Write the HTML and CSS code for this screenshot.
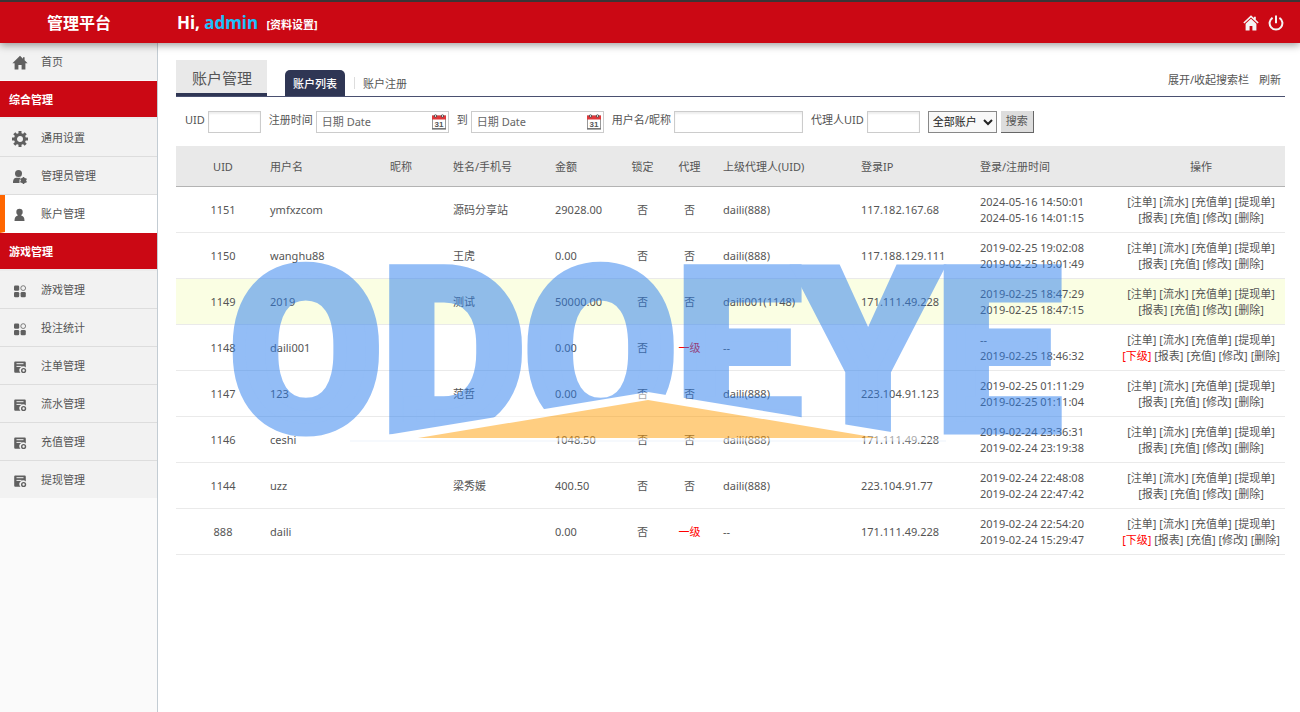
FILE: index.html
```html
<!DOCTYPE html>
<html lang="zh-CN">
<head>
<meta charset="utf-8">
<title>管理平台</title>
<link rel="stylesheet" href="styles.css">
</head>
<body>
<svg class="defs" aria-hidden="true">
  <symbol id="i-home" viewBox="0 0 16 16"><path d="M8 0.8 0.4 8.2h2.2V14.6h3.8V10h3.2v4.6h3.8V8.2h2.2L12.6 5.300V2.200h-1.600v1.500z"/></symbol>
  <symbol id="i-home2" viewBox="0 0 16 16"><path d="M8 0.300 0.300 7.500l1.100 1.100L8 2.500l6.600 6.100 1.100-1.100-2.900-2.700V1.800h-1.900v1.200z"/><path d="M8 3.700 2.600 8.700V15.500h4v-4.500h2.800v4.500h4V8.700z"/></symbol>
  <symbol id="i-power" viewBox="0 0 16 16"><path d="M4.600 2.800A6.400 6.400 0 1 0 11.400 2.800M8 0.500V8.200" fill="none" stroke="currentColor" stroke-width="2"/></symbol>
  <symbol id="i-gear" viewBox="0 0 16 16"><circle cx="8" cy="8" r="4.500" fill="none" stroke="currentColor" stroke-width="3"/><path d="M8 0v3M8 13v3M0 8h3M13 8h3M2.300 2.300l2.200 2.200M11.500 11.500l2.200 2.200M2.300 13.700l2.200-2.200M11.500 4.500l2.200-2.200" stroke="currentColor" stroke-width="3"/></symbol>
  <symbol id="i-admin" viewBox="0 0 16 16"><circle cx="6.500" cy="4.500" r="3.500"/><path d="M1 14c0-4 1.500-5.200 4-5.200h3.500L7.500 11v3z"/><circle cx="11.500" cy="11.500" r="2.700"/><path d="M11.500 8v7M8.500 9.800l6 3.500M8.500 13.300l6-3.500" stroke="currentColor" stroke-width="1.600"/></symbol>
  <symbol id="i-user" viewBox="0 0 16 16"><circle cx="7.500" cy="5" r="3.200"/><path d="M6 7h3l.5 1.800c2 .4 3 2 3 5.200h-10c0-3.200 1-4.800 3-5.200z"/></symbol>
  <symbol id="i-grid" viewBox="0 0 16 16"><rect x="2" y="2.500" width="5.200" height="5.200" rx="1.300"/><rect x="2" y="9" width="5.200" height="5.200" rx="1.300"/><rect x="8.600" y="9" width="5.200" height="5.200" rx="1.300"/><circle cx="11.200" cy="5.100" r="2.400" fill="none" stroke="currentColor" stroke-width="0.800"/></symbol>
  <symbol id="i-list" viewBox="0 0 16 16"><path d="M3.500 2.500h9c.8 0 1.300.5 1.300 1.200V8.600a3.600 3.600 0 0 0-5.300 5.200h-5c-.8 0-1.300-.5-1.300-1.300V3.700c0-.7.5-1.200 1.300-1.200z"/><path d="M4.500 4.700h7M4.500 7.400h5" stroke="#f2f2f2" stroke-width="1"/><circle cx="11.600" cy="11.500" r="1.900" fill="none" stroke="currentColor" stroke-width="1.400"/></symbol>
  <symbol id="i-cal" viewBox="0 0 14 16"><rect x="0.500" y="2" width="13" height="12.500" fill="#fff" stroke="#999"/><path d="M0 1.500h14v4H0z" fill="#e0383b"/><path d="M0 15h14" stroke="#555"/><circle cx="3.500" cy="2" r="1.200" fill="#fff" stroke="#333" stroke-width="0.800"/><circle cx="10.500" cy="2" r="1.200" fill="#fff" stroke="#333" stroke-width="0.800"/><text x="7" y="13" text-anchor="middle" class="cal-num">31</text></symbol>
</svg>

<header class="topbar">
  <h1 class="brand">管理平台</h1>
  <div class="hello">Hi, <span class="hello-name">admin</span> <a class="hello-link" href="#">[资料设置]</a></div>
  <nav class="top-actions">
    <a href="#" aria-label="首页"><svg><use href="#i-home2"/></svg></a>
    <a href="#" aria-label="退出"><svg><use href="#i-power"/></svg></a>
  </nav>
</header>

<div class="layout">
  <nav class="sidebar">
    <a class="item home" href="#"><svg><use href="#i-home"/></svg>首页</a>
    <h2 class="group">综合管理</h2>
    <a class="item" href="#"><svg><use href="#i-gear"/></svg>通用设置</a>
    <a class="item" href="#"><svg><use href="#i-admin"/></svg>管理员管理</a>
    <a class="item active" href="#"><svg><use href="#i-user"/></svg>账户管理</a>
    <h2 class="group">游戏管理</h2>
    <a class="item" href="#"><svg><use href="#i-grid"/></svg>游戏管理</a>
    <a class="item" href="#"><svg><use href="#i-grid"/></svg>投注统计</a>
    <a class="item" href="#"><svg><use href="#i-list"/></svg>注单管理</a>
    <a class="item" href="#"><svg><use href="#i-list"/></svg>流水管理</a>
    <a class="item" href="#"><svg><use href="#i-list"/></svg>充值管理</a>
    <a class="item" href="#"><svg><use href="#i-list"/></svg>提现管理</a>
  </nav>

  <main class="content">
    <div class="tabs">
      <h2 class="title">账户管理</h2>
      <a class="tab current" href="#">账户列表</a>
      <a class="tab" href="#">账户注册</a>
      <div class="tools"><a href="#">展开/收起搜索栏</a><a href="#">刷新</a></div>
    </div>

    <form class="search">
      <label for="uid">UID</label><input id="uid" class="short" type="text">
      <label for="from">注册时间</label><span class="date"><input id="from" type="text" placeholder="日期 Date"><svg><use href="#i-cal"/></svg></span>
      <label for="to">到</label><span class="date"><input id="to" type="text" placeholder="日期 Date"><svg><use href="#i-cal"/></svg></span>
      <label for="name">用户名/昵称</label><input id="name" class="long" type="text">
      <label for="agent">代理人UID</label><input id="agent" class="short" type="text">
      <select aria-label="账户类型"><option>全部账户</option></select>
      <button type="button">搜索</button>
    </form>

    <div class="table-wrap">
    <table>
      <colgroup><col class="c-uid"><col class="c-user"><col class="c-nick"><col class="c-real"><col class="c-money"><col class="c-flag"><col class="c-flag"><col class="c-parent"><col class="c-ip"><col class="c-time"><col class="c-ops"></colgroup>
      <thead>
        <tr><th class="mid">UID</th><th>用户名</th><th>昵称</th><th>姓名/手机号</th><th>金额</th><th class="mid">锁定</th><th class="mid">代理</th><th class="parent">上级代理人(UID)</th><th>登录IP</th><th>登录/注册时间</th><th class="mid">操作</th></tr>
      </thead>
      <tbody>
        <tr><td class="mid">1151</td><td>ymfxzcom</td><td></td><td>源码分享站</td><td>29028.00</td><td class="mid">否</td><td class="mid">否</td><td class="parent">daili(888)</td><td>117.182.167.68</td><td>2024-05-16 14:50:01<br>2024-05-16 14:01:15</td><td class="mid"><a href="#">[注单]</a> <a href="#">[流水]</a> <a href="#">[充值单]</a> <a href="#">[提现单]</a><br><a href="#">[报表]</a> <a href="#">[充值]</a> <a href="#">[修改]</a> <a href="#">[删除]</a></td></tr>
        <tr><td class="mid">1150</td><td>wanghu88</td><td></td><td>王虎</td><td>0.00</td><td class="mid">否</td><td class="mid">否</td><td class="parent">daili(888)</td><td>117.188.129.111</td><td>2019-02-25 19:02:08<br>2019-02-25 19:01:49</td><td class="mid"><a href="#">[注单]</a> <a href="#">[流水]</a> <a href="#">[充值单]</a> <a href="#">[提现单]</a><br><a href="#">[报表]</a> <a href="#">[充值]</a> <a href="#">[修改]</a> <a href="#">[删除]</a></td></tr>
        <tr class="hover"><td class="mid">1149</td><td>2019</td><td></td><td>测试</td><td>50000.00</td><td class="mid">否</td><td class="mid">否</td><td class="parent">daili001(1148)</td><td>171.111.49.228</td><td>2019-02-25 18:47:29<br>2019-02-25 18:47:15</td><td class="mid"><a href="#">[注单]</a> <a href="#">[流水]</a> <a href="#">[充值单]</a> <a href="#">[提现单]</a><br><a href="#">[报表]</a> <a href="#">[充值]</a> <a href="#">[修改]</a> <a href="#">[删除]</a></td></tr>
        <tr><td class="mid">1148</td><td>daili001</td><td></td><td></td><td>0.00</td><td class="mid">否</td><td class="mid red">一级</td><td class="parent">--</td><td></td><td>--<br>2019-02-25 18:46:32</td><td class="mid"><a href="#">[注单]</a> <a href="#">[流水]</a> <a href="#">[充值单]</a> <a href="#">[提现单]</a><br><a class="red" href="#">[下级]</a> <a href="#">[报表]</a> <a href="#">[充值]</a> <a href="#">[修改]</a> <a href="#">[删除]</a></td></tr>
        <tr><td class="mid">1147</td><td>123</td><td></td><td>范哲</td><td>0.00</td><td class="mid">否</td><td class="mid">否</td><td class="parent">daili(888)</td><td>223.104.91.123</td><td>2019-02-25 01:11:29<br>2019-02-25 01:11:04</td><td class="mid"><a href="#">[注单]</a> <a href="#">[流水]</a> <a href="#">[充值单]</a> <a href="#">[提现单]</a><br><a href="#">[报表]</a> <a href="#">[充值]</a> <a href="#">[修改]</a> <a href="#">[删除]</a></td></tr>
        <tr><td class="mid">1146</td><td>ceshi</td><td></td><td></td><td>1048.50</td><td class="mid">否</td><td class="mid">否</td><td class="parent">daili(888)</td><td>171.111.49.228</td><td>2019-02-24 23:36:31<br>2019-02-24 23:19:38</td><td class="mid"><a href="#">[注单]</a> <a href="#">[流水]</a> <a href="#">[充值单]</a> <a href="#">[提现单]</a><br><a href="#">[报表]</a> <a href="#">[充值]</a> <a href="#">[修改]</a> <a href="#">[删除]</a></td></tr>
        <tr><td class="mid">1144</td><td>uzz</td><td></td><td>梁秀媛</td><td>400.50</td><td class="mid">否</td><td class="mid">否</td><td class="parent">daili(888)</td><td>223.104.91.77</td><td>2019-02-24 22:48:08<br>2019-02-24 22:47:42</td><td class="mid"><a href="#">[注单]</a> <a href="#">[流水]</a> <a href="#">[充值单]</a> <a href="#">[提现单]</a><br><a href="#">[报表]</a> <a href="#">[充值]</a> <a href="#">[修改]</a> <a href="#">[删除]</a></td></tr>
        <tr><td class="mid">888</td><td>daili</td><td></td><td></td><td>0.00</td><td class="mid">否</td><td class="mid red">一级</td><td class="parent">--</td><td>171.111.49.228</td><td>2019-02-24 22:54:20<br>2019-02-24 15:29:47</td><td class="mid"><a href="#">[注单]</a> <a href="#">[流水]</a> <a href="#">[充值单]</a> <a href="#">[提现单]</a><br><a class="red" href="#">[下级]</a> <a href="#">[报表]</a> <a href="#">[充值]</a> <a href="#">[修改]</a> <a href="#">[删除]</a></td></tr>
      </tbody>
    </table>
    <svg class="watermark" viewBox="0 0 860 190">
      <text x="-2" y="172" class="wm-text">ODOEYE</text>
      <path d="M118 185 416 136 714 185z" fill="#fff"/>
      <path d="M118 185H714" stroke="#dfeafb"/>
      <path d="M186 182 416 144 646 182z" fill="#ff9e05"/>
    </svg>
    </div>
  </main>
</div>
</body>
</html>
```
FILE: styles.css
```css
* { box-sizing: border-box; }
body {
  margin: 0;
  min-height: 100vh;
  display: flex;
  flex-direction: column;
  font: 11px/16px "Noto Sans", "Noto Sans CJK SC", sans-serif;
  color: #555;
  background: #fff;
}
a { color: inherit; text-decoration: none; }
h1, h2 { margin: 0; font-size: inherit; }
.defs { display: none; }

.topbar {
  position: relative;
  display: flex;
  align-items: center;
  height: 43px;
  padding-right: 16px;
  border-top: 2px solid #3a3536;
  background: #cb0814;
  color: #fff;
  box-shadow: 0 2px 8px rgba(0, 0, 0, 0.4);
}
.brand { width: 158px; text-align: center; font-size: 16px; }
.hello { padding: 2px 0 0 19px; font-size: 17px; font-weight: bold; }
.hello-name { color: #1cc0fa; }
.hello-link { margin-left: 4px; font-size: 11px; }
.top-actions { display: flex; gap: 9px; margin-left: auto; }
.top-actions a { display: flex; }
.top-actions svg { width: 16px; height: 16px; fill: #f4f4f4; color: #f4f4f4; }

.layout { flex: 1; display: flex; }
.sidebar {
  width: 158px;
  flex-shrink: 0;
  border-right: 1px solid #c3ccd3;
  background: #fafafa;
}
.item {
  display: flex;
  align-items: center;
  gap: 13px;
  height: 38px;
  padding-left: 12px;
  border-bottom: 1px solid #ddd;
  background: #f2f2f2;
}
.item:last-child, .item.home { border-bottom-color: transparent; background-clip: padding-box; }
.item svg { width: 16px; height: 16px; margin-top: 3px; fill: #606060; color: #606060; }
.item.active { padding-left: 7px; border-left: 5px solid #f60; border-bottom-color: #fff; background: #fff; }
.group {
  height: 38px;
  padding-left: 9px;
  border-bottom: 2px solid #ececec;
  background: #cb0814;
  color: #fff;
  line-height: 38px;
}

.content { flex: 1; min-width: 0; padding: 17px 15px 20px 18px; }
.tabs { display: flex; align-items: flex-end; height: 37px; border-bottom: 1px solid #4a5070; }
.title {
  height: 36px;
  margin-right: 18px;
  padding: 0 15px 0 16px;
  border-bottom: 3px solid #2f3654;
  background: #e9e9e9;
  font-size: 15px;
  font-weight: normal;
  line-height: 36px;
}
.tab { height: 26px; padding: 0 8px; line-height: 28px; }
.tab.current { margin-right: 9px; border-radius: 5px 5px 0 0; background: #2f3654; color: #fff; font-weight: 500; }
.tab + .tab:not(.current) { height: 12px; margin-bottom: 7px; border-left: 1px solid #ddd; line-height: 14px; }
.tools { display: flex; gap: 10px; margin-left: auto; padding: 0 4px 8px 0; }

.search { display: flex; align-items: center; height: 49px; padding-left: 9px; }
.search label { margin-right: 3px; padding-bottom: 3px; white-space: nowrap; }
.search input, .search select, .search button {
  height: 22px;
  margin: 0;
  padding: 0 5px;
  font: inherit;
  color: #555;
}
.search input { border: 1px solid #ccc; background: #fff; margin-right: 8px; }
.search input.short, .search input.long { box-shadow: inset 0 2px 2px #eee; }
.search .short { width: 53px; }
.search .long { width: 129px; }
.date { position: relative; display: flex; }
.date input { width: 133px; }
.date svg { position: absolute; top: 3px; right: 11px; width: 14px; height: 16px; }
.search input::placeholder { color: #666; opacity: 1; }
.cal-num { font: bold 8px "Liberation Sans", sans-serif; fill: #555; }
.search select {
  width: 69px;
  margin-right: 4px;
  padding: 0;
  border: 1px solid #888;
  border-radius: 0;
  background: #f8f8f8;
  color: #222;
}
.search button { border: 1px solid #666; border-width: 0 1px 1px 0; background: #ddd; }

.table-wrap { position: relative; }
table { width: 100%; border-collapse: separate; border-spacing: 0; table-layout: fixed; }
.c-uid { width: 94px; }
.c-user { width: 120px; }
.c-nick { width: 63px; }
.c-real { width: 102px; }
.c-money { width: 64px; }
.c-flag { width: 47px; }
.c-parent { width: 148px; }
.c-ip { width: 119px; }
.c-time { width: 137px; }
.c-ops { width: 168px; }
th, td { padding: 1px 0 0; text-align: left; font-weight: normal; white-space: nowrap; }
th { height: 41px; border-bottom: 1px solid #b3b3b3; background: #e9e9e9; }
td { height: 46px; border-bottom: 1px solid #eaeaea; }
.hover td { background: #fafee3; }
.mid { text-align: center; }
th.parent, td.parent { padding-left: 10px; }
.red { color: #f00; }

.watermark {
  position: absolute;
  top: 110px;
  left: 56px;
  width: 860px;
  height: 190px;
  opacity: 0.5;
  pointer-events: none;
}
.wm-text {
  font: bold 220px "Liberation Sans Narrow", Roboto, sans-serif;
  fill: #297def;
  stroke: #297def;
  stroke-width: 13px;
}
```
